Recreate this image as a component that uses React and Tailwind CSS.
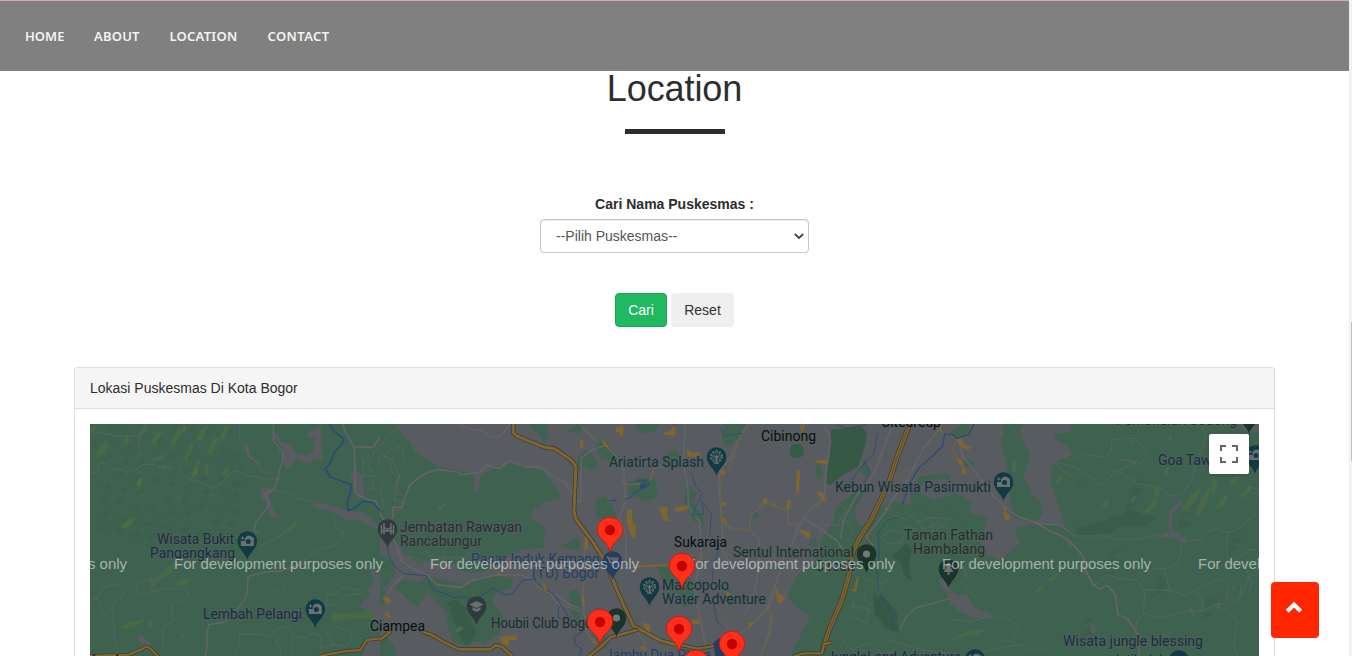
import React from 'react';

const ROAD = '#646467';
const GOLD = '#7f6530';
const GREY = '#585c61';
const GREEN = '#3e624f';
const OLIVE = '#486848';
const BLUE = '#2b4a72';
const FOREST = '#385b48';

const markers = [[610, 530], [600, 622], [682, 566], [679, 629], [732, 644], [696, 663]];
const watermarks = [-82, 174, 430, 686, 942, 1198];

const yellowWest = [
  'M60 205l14-12 4 14-12 16z', 'M82 275l12-20 18-15 4 18-16 22-18 12z', 'M160 240l14-24 4 22-8 26z', 'M205 225l20-28 14-2-14 22-18 20z',
  'M240 250l26-40 12 4-22 40z', 'M300 250l24-44 14 4-26 50z', 'M345 290l16-34 14-8-12 28-16 32z', 'M375 245l18-36 18-10-14 40z',
  'M410 280l22-46 16-2-22 50z', 'M448 232l18-38 14 4-20 44z', 'M360 350l12-28 12 4-8 26z', 'M455 345l14-24 10 6-12 20z', 'M198 380l10-28 10-2-8 34z',
  'M245 300l20-12 30-6-14 14-30 8z', 'M264 320l22-8 12 4-20 12z', 'M370 320l18-24 4 10-12 26z', 'M402 345l6-40 8 4-4 40z',
  'M150 500l24-22 28-10-22 32-22 8z', 'M315 412l22-6-8 14z', 'M415 412l14-12 6 10z', 'M560 566l26-20 34-12 24-24 44-36-14 26-46 34-30 12z',
  'M240 660l24-10 30-32 30-14-14 28-34 22-34 32z', 'M310 670l34-14 20 4-34 20z', 'M140 808l36-22 52-8-36 26z', 'M232 800l10-18 8 8-10 16z',
  'M786 762l60-4 40-8 24 8 40-2-30 22-66-2-70 10z', 'M604 690l18-6-8 12z', 'M634 682l16-4-8 10z', 'M320 838l20-14 4 8z',
];
const yellowEast = [
  'M540 70l16-22-4 24z', 'M655 60l6-20 6 22z', 'M315 186l18-24 6 4-8 22z', 'M450 262l22-24 8 2-10 18z', 'M540 240l20-14-10 24z', 'M570 285l24-24 16-24 14 2-18 26-24 30z',
  'M610 210l14-18 4 24-12 22z', 'M640 160l14-24 4 6-8 24z', 'M690 275l28-46 36-30-10 34-30 40z', 'M740 280l12-44 28-36-4 38-24 46z', 'M780 215l10-50 14 20-10 40z',
  'M790 270l30-40 20-10-22 40z', 'M835 190l24-26 16 4-24 26z', 'M895 150l16-22 10 4-16 22z', 'M860 235l30-30 20-8-26 34z', 'M480 310l14-10 2 12z',
  'M245 520l22-20 16-4-18 20z', 'M285 480l22-10 24-14-20 26z', 'M392 542l12-10 2 6z', 'M0 660l30-18 34-12 48-4-36 20-50 8-26 10z', 'M865 550l6-50 6 4-6 44z', 'M800 565l8-26 4 22z',
  'M790 620l10-12 4 8z', 'M905 450l16-10 0 14z', 'M840 505l16-10-6 14z',
];
const shadeSpecks = Array.from({ length: 70 }, (_, i) => {
  const x = 65 + ((i * 137) % 440);
  const y = 196 + ((i * 71) % 350);
  return `M${x} ${y}l${8 + (i % 5) * 5} -${4 + (i % 4) * 4} 6 8 -${10 + (i % 3) * 6} 12z`;
}).join('');
const shadeEast = Array.from({ length: 45 }, (_, i) => {
  const x = 380 + ((i * 149) % 520);
  const y = 190 + ((i * 67) % 480);
  return `M${x} ${y}l${10 + (i % 5) * 6} -${3 + (i % 4) * 4} 8 6 -${12 + (i % 3) * 6} 9z`;
}).join('');

function Line({ d, c = ROAD, w = 3 }) {
  return <path d={d} fill="none" stroke={c} strokeWidth={w} strokeLinejoin="round" strokeLinecap="round" />;
}

function Highway({ d, w = 9 }) {
  return (
    <>
      <Line d={d} c="#3f3828" w={w + 4} />
      <Line d={d} c={GOLD} w={w} />
    </>
  );
}

function Label({ x, y, children, c = '#14303a', len, size = 14 }) {
  return (
    <text x={x} y={y} fill={c} fontSize={size} textLength={len} lengthAdjust="spacingAndGlyphs" stroke="#565e5f" strokeOpacity="0.75" strokeWidth="2" paintOrder="stroke" fontFamily="Roboto, sans-serif">
      {children}
    </text>
  );
}

function Poi({ x, y, c = '#113a42', kind }) {
  const g = '#697173';
  return (
    <g transform={`translate(${x} ${y})`}>
      <path d="M0 19C-1.500 12-9.800 8-9.800 0A9.800 9.800 0 0 1 9.800 0C9.800 8 1.500 12 0 19Z" fill={c} />
      {kind === 'camera' && (
        <>
          <path d="M-2.500-3.500h1l1.200-1.800h4l1.200 1.800H6.500V5h-13v-5h4z" fill={g} />
          <circle cx="1" cy=".6" r="2.500" fill={c} />
          <path d="M-6.500-3h3.400M-4.800-4.700v3.400" stroke={g} strokeWidth="1" />
        </>
      )}
      {kind === 'wheel' && (
        <g fill="none" stroke={g} strokeWidth="1.200">
          <circle r="5.600" cy="-.5" strokeWidth="1.600" strokeDasharray="2.200 1.320" />
          <circle r="3.900" cy="-.5" strokeWidth=".8" />
          <path d="M0-2.500V6M-2.500-1.500L0 1.500l2.500-3M-2.500 6.200h5" />
        </g>
      )}
      {kind === 'dot' && <circle r="3.600" fill="#737978" />}
      {kind === 'tree' && <path d="M0-7l4 5H2l3 5H1v3h-2V3h-4l3-5h-2z" fill={g} />}
      {kind === 'school' && <path d="M0-5l7 3.500L0 2l-7-3.500zM-4 1v3l4 2 4-2V1L0 3z" fill={g} />}
      {kind === 'gate' && (
        <path d="M-3.500-6V5.500M3.500-6V5.500M-6 -4V5.500M6-4V5.500M-6.500 2H6.500M-3-1.500C-1 1 1 1 3-1.500M-1 0v2M1 0v2" fill="none" stroke={g} strokeWidth="1.400" />
      )}
      {kind === 'cart' && <path d="M-6.500-4h2l2 6h6.500M-4-3H5.500L4 1H-2.500zM-2 4.500h1.200M3 4.500h1.200" fill={g} fillOpacity=".7" stroke={g} strokeWidth="1.200" />}
    </g>
  );
}

function Marker({ x, y }) {
  return (
    <g transform={`translate(${x} ${y})`}>
      <path d="M0 23.500C-.9 18-2.500 14.500-6.500 10.800-9.500 8-12.700 4.600-12.700-.3A12.700 12.500 0 0 1 12.700-.3C12.700 4.600 9.500 8 6.500 10.800 2.500 14.500.9 18 0 23.500Z" fill="#ff2f1c" stroke="#c9150b" strokeWidth="0.800" />
      <circle r="5.200" fill="#c20300" />
    </g>
  );
}

function MapWest() {
  return (
    <g transform="translate(70 360) scale(.33333)">
      <path d={shadeSpecks} fill={FOREST} opacity=".5" />
      <path d={yellowWest.join('')} fill={OLIVE} />
      <path d="M338 205l12-8-8 24zM368 345l12-24 2 20zM204 366l10-12-4 24zM166 494l16-10-14 16z" fill="#6b7038" opacity=".7" />
      <g fill={GREY}>
        <path d="M524 250l12 4 4 32 34 24-20-4-18-16-10-16zM608 225l14-8 10 28 38 14 2 20 30 6 32 14-18 12-40-14-14 24-14 8-10-24 4-26-16-30zM708 238l10-26 36-12 2 100-30-2-22-10 26-12 4-44-20 2z" />
        <path d="M568 386l22-6 18 8-10 22 6 24 10 22 14 16-24 2-10-26-6-18-16-14 6-8z" />
        <path d="M840 345l20-16 18 20 6 60-16 8-14-20-8-36zM728 428l62 8 40 16 50 4 36 30 10 22-24-8-30-18-42-2-40-24-60-16z" />
        <path d="M518 514l30 2-2 18-16 2zM202 830l14-4 24 22 8 20-20-10-18-10zM900 628l60 16v170l-40-20-16-40-36-12 16-24 20-10-14-22 24-16-6-14z" />
        <path d="M890 835l70-18v71h-86z" />
      </g>
      <Line w={2} d="M60 340l22-4 4-26 24 0 12 16 30 2 12 8 38-8 16-14 34-2 20 16 22-6 36 10 22 24 30 8 28 12 20 8 24-14 20-24 26-14 24 12 14 6 24 0 30 10 38-4M60 236l14-14 10-8 18 6 20 4 12 6 30-2 16 0 18-2 22-18 4-14M206 230l4 40-6 24M508 194l0 40 20 22 8 34 28 24 14 22 30 6M60 726l28-22 16-22 40-12 22 24-10 16-30 22 0 20-14 14-20-16-4-26-14-14M130 760l2 60 4 30M200 696l6-26 34-16 44-2 20-16M200 696l24 8 24-10 34-8 66 2 8 20-16 14-34 8-2 26 10 26-32 18-4 40 4 24M605 392l40 4 36 18 44 12M792 470l2 32 24 10-2 26-22 20-42 10-34 20-40 26-52 20-42 4M866 690l-44-10-26 22-26 4-2 32 30-6 28-26 42-4M510 822l56 0 30 8 20-20 34-12 18 22 0 68M510 822l-4 40-12 26M640 820l-22 22 14 34 0 12M668 830l44 4 16-14 24 8 2 60M760 810l24 22 0 26-44 6M800 800l40 16 4 30-24 14-34-8" />
      <Line w={4} d="M610 194l0 48 28 36 0 20-14 52-12 38-30 16 16 20-4 16-36 46-6 24 14 10M570 640l26-6 36 0 80-28M534 650l-2 50-10 24-56 62-50 8-6 40 2 24-6 30M570 640l-36 10" />
      <Line w={5} d="M820 194l4 20 28 44 2 50 2 92 40 20 22 4 28 60M850 260l60 2 18-28 32-26" />
      <Line w={2} d="M880 320l-6-36 10-14 14 14-14 16zM886 300l20-2 8-26 34 2 10-16M880 324l0 22 34 4 0-14-16-4 0-24M930 280l-4 34 16 22-4 60-20 8M890 375l20-12 2 24-20 0 0 18" />
      <Line c={BLUE} w={5} d="M780 194l10 18 32 24-4 14-24 26-14 34-14 16 14 24 64 24-2 18-10 38 2 22 20-8 24-20 28 2 40 42" />
      <Highway w={7} d="M60 888l116-4 38-16 14-8 12 4 28 30M750 888l72-14 50-4 18-30 36-4 34-12" />
      <path d="M938 720l20-10 2 24-16-8zM946 760l14-14v24z" fill="#8b6e2f" />
    </g>
  );
}

function MapCenter() {
  return (
    <g transform="translate(380 420) scale(.33333)">
      <path d="M0 12h300v500l-120 196H0z" fill={GREY} />
      <g fill={GREEN}>
        <path d="M0 12h46l4 10 14 8 0 16 24 16 14 30 50 34 30 16-34 8-26 20-24 32-18 58-30 6-2 42-50-10z" />
        <path d="M135 150l50-8 96 16 2 60 14-6 4-50 24-8 30-12 36-14 38 10 60 14 24 34 24 34 10 12-50 14-36 22-10 30 44 20-4 66-60 2-44 20-36 32-34 16-40 6-34-8-24-26-60 2-42 0-40-20-16-28-34-20 4-66 40-34 18-50z" />
        <path d="M0 400l34 20 14 40-24 32-24 14zM0 500l24 20-6 26-18 10zM100 500l40-30 100 20 20 4 36-22 60-6 44 12-6 26-44 14-14 28 26 32 14 28-26 40-40 26-20-10-26 16-46-12-16-46 0-40-28-30-28-30z" />
        <path d="M45 500l30-24 68 20-8 30-20 34-20-10zM0 660l20-12 30 44-10 16H0z" />
        <path d="M448 12l52 0 6 30-12 28-22-30-22-20zM594 112l22-24 26 24 12 24-18 14-28-10-20 20zM644 70l14 22-16-30 40 2 10 24 30 22-18 14-40-6zM744 190l30-16 52 4 8 50-36 16-50-20zM650 240l22-12 20 20 16 34-4 20-20 8-34-20-4-34zM540 376l26-6 18-18 16 12-4 28-40-8zM845 110l40-20 15 16v30l-46 4zM830 440l60-10 10 90-40-8z" />
        <path d="M566 516l28-8 10 40-6 56-18-4-8-50zM620 90l16 16-20 6zM630 640l36-10 20 40-8 20z" />
        <path d="M760 12l80 0-20 24-34 4zM560 34l30-22 20 0-10 30z" />
      </g>
      <path d="M200 545l30-6 30 30 30 70-30 40-20-30z" fill="#385a49" />
      <path d="M168 270l22-20 10 2-18 20zM224 630l20-12 6 8-20 14z" fill="#466a4f" />
      <Line w={2} d="M0 80l34-46 28-10M0 100l36 18 22 52-16 70 36 10M0 130l30-40 34-10 10 40M10 260l-8-60 36-40-10-40M60 160l-20 50 28 16M0 480l40-24M70 412l40 0 30 20 44-20 30 0 0 54M120 398l20-4 36 60M190 395l0 68M220 414l44-4 10-22M100 335l40-2 34-26 26 22 30 6" />
      <Line w={5} d="M38 294l2-32 26 0 6-22 18-46 42-32 42-14 58 8 14 8 50-6 26-22 38 10 28-24 50 20 40-2 42 30 34 16 22 32 8 24 18 2 0-60 2-70 28-22 42-16 38 36 20 40 4 94-18 46 20 52 0 90M0 280l50 96 14 46 34 26 42 16 30 30 72 8 40-22 60-14 80-2 34 14 40 36 30 10 42 30 28 10" />
      <Line w={4} d="M70 466l-30 30-30 40M240 16l28 10 40 6 24 18 24 2 16-16 20-26M600 14l28 30 26 24M728 184l20 10 36-4 28-12 8-32 60-14M612 360l2 100-6 80 10 90 22 40M790 440l-90 6M470 500l40 20 20 28 70 26M750 600l24 40 24 34" />
      <Line c={BLUE} w={3} d="M0 290l20 60 6 54 18 36 30 22 64 4 20 42 70 26 20-4 30 10 40-22 20-14 40 22 20-6 30-40 30-2 34 30 30 14 22 34 32 50 4 14 20-20 24 0" />
      <Line c={BLUE} w={3} d="M536 560l-2 30 26 22 12-22M606 636l-24 14 4 24 20 14-10 20M770 184l36-4-2 18-42 20-8 14-20 6M690 240l20 4-8-8M680 300l24 20-4 10" />
      <path d="M780 188l26-8-12 24-14 4z" fill={BLUE} />
      <g fill={GOLD}>
        <path d="M708 22l22-6 0 26-8 12-4-16-10 0zM844 38l26-4 8-14 8 0 0 28-26-4zM600 58l10 4 0 20-10 0zM836 262l28 0-4 24 8 18-14-2-10-20zM742 268l14 2 0 30 12 20-4 36-10-8-14-40zM670 60l18 20-6 6-16-18zM884 260l16 2v12l-16 0zM8 534l16-4 10 14-14 10zM14 580l10-6 10 18-16 0zM358 650l52-4 0 14-22 0-4 18-16-4zM486 490l10 4 6 28-12-18zM350 456l16 6-10 6zM606 530l8 2 0 30-10-20zM766 436l130-4v6l-130 4zM614 350l10 0 0 40-8 0zM640 650l10 20-10 6zM790 606l20 8 0 26-16-6zM772 682l24-4 2 16z" />
      </g>
      <Line c={GOLD} w={2} d="M612 395l2 65-6 80 10 90 22 40M728 184l20 12 36-4 28-12 8-32" />
      <Highway d="M400 8l0 30 10 10 84 34 30 4 50 34 14 20-6 134 6 24 52 70 38 60 36 90 32 70 14 30 20 10 62 34 38 10 50 10" />
      <Highway d="M628 708l34-28 30-28 78-22M0 660l30-24M130 636l28 10 30 18 48 24 96 0 14-12 20 4 30 28" w={8} />
    </g>
  );
}

function MapEast() {
  return (
    <g transform="translate(660 420) scale(.33333)">
      <g fill={GREEN}>
        <path d="M0 90l44-12 18 54-16 16-46-12zM190 12h70l-18 40-48 28-8-30zM78 190l34 30-18 26 34 40 0 34-30-20-24-50zM278 270l18 14-14 14z" />
        <path d="M484 360l30-50 16-50 50-40 12-22 20 24-28 46 8 40 30 20 12-28 18-30 42-28 54 14 36-20 72 24 44-10v470H384l40-80 26-50-42-30-26-30 30-64 52-40 10-30z" />
        <path d="M750 230l26-60 70-10 54 16v60l-60 44-80-10zM196 504l20 8 8 40-18 6-12-30zM30 420l66 60 10 70-34 14-42-60zM0 600l28 6-6 24-22 4zM110 290l24 20-14 24zM450 360l30-8-10 30-24-6zM344 440l20-10-8 30zM470 120l20 30-10 30-14-10zM610 120l20 30-10 20-20-14z" />
        <circle cx="410" cy="93" r="22" fill="#345b45" />
      </g>
      <g fill={GREY}>
        <path d="M836 480l40-20 24 0v108l-14-12-20-24zM790 190l40-14 70 8v56l-20-14-60 12-40-20z" />
      </g>
      <path d="M514 30l90-12 18 20-8 44-20 60-40 20-26 20-18 14-12-6 12-100zM640 520l30 10 40 44 8 64-40-14-36-44zM696 410l44-40 16 20-10 44 8 50-22-20-10-36z" fill="#365946" />
      <Line w={5} d="M76 12l-6 120 12 60 4 70 34 44 4 100-20 100 8 50 24 118M264 14l-22 30-30 70-30 36-6 30 6 90 6 76-4 40 20 36M496 18l16 44-14 90-4 84-42 30-38 54-12 40-30 50-18 60-30 90-42 50-40 30M432 296l40 24 56 40 20 26M700 12l-26 64-34 90-50 60-40 76-8 50M846 14l-10 16-46 54-50 100-46 60-16 30-60 76 20 26" />
      <Line w={4} d="M0 440l30-2 90-4M190 302l20 20 60 10 28 24-2 90-10 60-36 90M270 328l2-40 40-40 72 22 0 42 30 2M320 560l18 20-8 60-28 68M720 626l20-36 26-26 60-16 74-20" />
      <Line w={2} d="M700 286l34 10 20-10 20 20 44-14 76 10M664 350l30-20 40 10-8 26-40 6zM470 366l20-50 44-2 8-20 20-24-20-16-20 20-4 30M540 294l34 20 4 32M770 300l20 30 40-20 20 12 40-10M620 480l40 10 22-12-24 30-6 24M576 590l46 22 4-46-50-4 4-30M620 510l-6 24 20 20 8-10M540 650l34 40 50-20 44 30 40-4M690 660l100 30 80 10M740 320l26 8-4 30 34 0M810 290l10 50 44-40" />
      <Line c={BLUE} w={2.5} d="M182 22l10 26 54-8M94 160l14 40 20 22-20 34-10 30 34-4-8-40 30 40-4 60 30 40-20 50-4 60M120 480l20 60 20 4 10 60 20 20M652 40l-10 60-46 50-20 30-30 20M712 292l-30 10-28 36 4 70-8 44 6 60 34 60 10 60M610 120l20 40-18 30M530 14l30 12 60-12" />
      <Line c={BLUE} w={3.5} d="M898 56l-44-14-6 36-30 30-40 34-30 50-20 60" />
      <g fill={GOLD}>
        <path d="M4 40l26 0 10-18 6 0 2 26-20 0-24-4zM78 88l20 12 26-4-8 14-34 0zM182 150l14 4-4 12-12-2zM408 152l14-2-2 18-4 54-8-2 2-60zM466 122l36-4 0 14-36-4zM468 214l20 4 12 28-12-4zM380 240l12 0-4 28-8 0zM414 326l24 8 14 0-4 24-22-18zM308 238l14-4-2 18-10-2zM334 248l12 4-6 12zM46 262l40-6-4 14-36 8zM12 280l14 18-4 4-20 0-10-40zM186 246l18 4-16 8zM182 294l16 0 0 18-12-4zM196 514l20 6-16 10zM346 500l10 20 20 14-20 20-8-30zM262 608l20-2-14 18zM300 524l18 14-18 6zM418 14l18-2-10 30zM96 600l20-4 2 16-22 0zM680 260l6 12-14-4zM570 510l12-4 10-38 4 4-8 44zM838 22l12 16-14-4zM876 84l16-20 8 40-10 22z" />
      </g>
      <Line c="#75623a" w={2.5} d="M264 14l-26 50-34 90-24 24 6 110 14 34 68 10M270 328l2-40 40-40 72 22 0 42 30 2M20 406l98 0M20 436l98 0M350 520l-28 50 10 20-8 60-24 58M172 560l16 34 30 20M492 236l-34 36M744 150l-34 40M636 330l-20 34-36 26" />
      <Highway d="M745 22l-34 90-24 76-54 112-36 56-18 40-12 70-20 70-42 100-16 52" w={12} />
      <Line c="#4b402a" w={2} d="M745 22l-34 90-24 76-54 112-36 56-18 40-12 70-20 70-42 100-16 52" />
      <Highway d="M-10 658l34 10 90 18 60-10 60-12M404 708l26-8 56 0 6-28 20-4" w={7} />
      <path d="M160 668l18-14 20 20-6 34h-26z" fill="#243e62" />
    </g>
  );
}

function MapFarEast() {
  return (
    <g transform="translate(950 420) scale(.33333)">
      <path d="M0 12h930v700H0z" fill={GREEN} />
      <path d={shadeEast} fill={FOREST} opacity=".45" />
      <g fill={GREY}>
        <path d="M0 12h360l10 20-58 12 2 14 40 18 10 24-20 14-34 10-10 56 26 80 20 60-82-8-60 10-10 22 18 22-60 56-44-18-20-40 16-40 8-30-50-12-30-32-32-22z" />
        <path d="M0 510l20 14 30 0 26 40 54 20-14 12-50-6-30-10-20-18-16-10zM690 240l8 10-32 34 0 44 24 16 20 16-6 12-22-12-8-10-46 0 30-16-4-26 4-32zM420 606l18 24 0 14-14-12zM350 350l18 28-8 6-14-30zM396 408l14 50-10 6z" />
      </g>
      <g fill={GREEN}>
        <path d="M0 40l36-28 24 0-4 24-30 20zM160 12l62 0-14 20 34 74-24 72 22 20 0 22 32 24 6 40-24 22-60-10-14-54-4-60-10-60-16-60 10-20zM202 206l24-6 20 14-18 14-28-8zM0 220l30 4 32 24 0 48-14 6-48-6zM40 124l14-8 20 14-10 12-20-6z" />
      </g>
      <path d={yellowEast.join('')} fill={OLIVE} />
      <path d="M380 325l74-18 36-20 34-2 8-20 40 14 50 10-40 30-60-4-40 24-102 10z" fill={FOREST} opacity=".7" />
      <Line w={2} d="M170 12l30 30 32 40M380 120l20-18 60 10 24-18 0-34 40-4 34 0 32 40-14 34-60-12M516 118l40 10-54 26-50 40-28-20-46-32-70-18 54-22 18 18M310 124l44 40 20 2M464 160l36-10 60 40 66 12 36 26 32-4M750 12l20 36-24 60-20 70-32 50M370 348l90 0 40 10 66 0 40-10 40 0M710 362l40-2 20-24 30-10 32 12 0 90 54 12 20 50-10 30M830 338l30-6 40-36 26-20M694 372l0 34-20 30-32 10-32 0-34 36M645 452l14 60M470 464l40 12 54 4 20 40-4 64-18 14-6 40M424 502l36-26 14-12M580 508l80 4 46 14 32-14 30-20 44-14 24 28-8 34 30 0 20-20 20-50 34-14M740 514l20 30-6 14 16 18M580 580l46 14 84-20 50-2 40-20 26 2M800 560l30 14 30 24 0 34-10 40 12 36M836 436l60-46 30 0M898 200l28 10 0 14-26-8zM0 600l60 4 50-12 60 0 40 34M206 626l-20 38-40-2M60 704l90-20 60-10 30 14 54 0M500 682l60-8 90-30 20-10M720 560l10 30M30 480l30 34 50 46" />
      <Line w={5} d="M0 40l26 24 14 46 60 78 34 44 40 36 34 24 48 14 40 26 40 16 24 16 26 30 16 20-2 24 30 56 20 14 18-12 10 4 18 24 8 60 30 14 30 44 4 92" />
      <Line w={3} d="M258 312l70 2 46 34M20 470l-10-20 30-10 10 34" />
      <path d="M22 54l12 0 10 20 20 8-10 8-24-12zM18 118l16 0 8 26 6 4 2 18-16-8 4-18-12-10zM160 262l8 0 0 18 12 4-2 18-12 0-4-20z" fill={GOLD} />
      <Line c={GOLD} w={3} d="M24 60l-16 24 16 36" />
      <Line c={BLUE} w={4} d="M0 40l22 16 36-14 14-30" />
      <path d="M862 12h65v26h-30z" fill={GREY} />
      <path d="M186 130l4-6 10 8-4 24-8 0z" fill="#52635b" />
    </g>
  );
}

function LocationMap() {
  return (
    <svg viewBox="90 424 1169 232" className="block h-[232px] w-full" role="img">
      <defs>
        <clipPath id="centreArea"><path d="M380 424h299v232H380z" /></clipPath>
        <clipPath id="eastArea"><path d="M678 424h274v232H678z" /></clipPath>
      </defs>
      <path d="M90 424h300v232H90z" fill={GREEN} />
      <path d="M440 424h520v232H440z" fill={GREY} />
      <MapWest />
      <g clipPath="url(#centreArea)"><MapCenter /></g>
      <g clipPath="url(#eastArea)"><MapEast /></g>
      <MapFarEast />

      <Poi x={247.300} y={541} kind="camera" />
      <Poi x={315.300} y={609} kind="camera" />
      <Poi x={387.500} y={529} kind="gate" c="#303a3d" />
      <Poi x={476.500} y={606} kind="school" c="#303a3d" />
      <Poi x={716.500} y={457} kind="wheel" />
      <Poi x={649.500} y={587} kind="wheel" />
      <Poi x={612.500} y={561} kind="cart" c="#243e62" />
      <Poi x={616.500} y={618} kind="dot" c="#1c3329" />
      <Poi x={866.500} y={554} kind="dot" c="#1c3329" />
      <Poi x={948.500} y={569} kind="tree" c="#1c3329" />
      <Poi x={1003.500} y={482} kind="camera" />
      <Poi x={1255} y={455} kind="camera" />
      <Poi x={1249} y={415} c="#1c3329" />
      <Poi x={975} y={659} kind="camera" />
      <Poi x={1179} y={660} />

      <Label x={157} y={544} len={77}>Wisata Bukit</Label>
      <Label x={150} y={558} len={85}>Pangangkang</Label>
      <Label x={203} y={619} len={99}>Lembah Pelangi</Label>
      <Label x={370} y={631} len={55} c="#080d0d">Ciampea</Label>
      <Label x={88} y={665} c="#080d0d">Jambu</Label>
      <Label x={400} y={532} len={122} c="#242f31">Jembatan Rawayan</Label>
      <Label x={400} y={546} len={82} c="#242f31">Rancabungur</Label>
      <Label x={471} y={564} len={129} c="#243e62">Pasar Induk Kemang</Label>
      <Label x={532} y={578} len={67} c="#243e62">(TU) Bogor</Label>
      <Label x={491} y={628} len={106} c="#1c2c2b">Houbii Club Bogor</Label>
      <Label x={609} y={467} len={95}>Ariatirta Splash</Label>
      <Label x={761} y={441} len={55} c="#080d0d">Cibinong</Label>
      <Label x={881} y={427} len={60} c="#080d0d">Citeureup</Label>
      <Label x={674} y={547} len={53} c="#080d0d">Sukaraja</Label>
      <Label x={733} y={557} len={121} c="#183329">Sentul International</Label>
      <Label x={815} y={571} len={40} c="#183329">Circuit</Label>
      <Label x={662} y={590} len={67}>Marcopolo</Label>
      <Label x={662} y={604} len={104}>Water Adventure</Label>
      <Label x={605} y={660} len={106} c="#243e62">Jambu Dua Plaza</Label>
      <Label x={827} y={662} len={134}>JungleLand Adventure</Label>
      <Label x={835} y={492} len={156}>Kebun Wisata Pasirmukti</Label>
      <Label x={904} y={540} len={89} c="#183329">Taman Fathan</Label>
      <Label x={913} y={554} len={72} c="#183329">Hambalang</Label>
      <Label x={1158} y={465} len={72}>Goa Tawing</Label>
      <Label x={1116} y={425} len={121} c="#183329">Pemandian Sodong</Label>
      <Label x={1063} y={646} len={140}>Wisata jungle blessing</Label>
      <Label x={1112} y={665} len={54}>Jatibulak</Label>

      {watermarks.map((x) => (
        <text key={x} x={x} y="569" fill="#fff" fillOpacity=".53" fontFamily="'Liberation Sans', sans-serif" fontSize="15" textLength="209">
          For development purposes only
        </text>
      ))}
      {markers.map(([x, y]) => <Marker key={`${x}-${y}`} x={x} y={y} />)}
    </svg>
  );
}

export default function App() {
  return (
    <div className="relative flex h-[656px] w-[1352px] overflow-hidden bg-white font-['Liberation_Sans',sans-serif] text-sm text-[#2d2d2d]">
      <div className="flex w-[1349px] flex-col">
        <nav className="flex h-[71px] shrink-0 items-center border-t border-[#d8a9b4] bg-[#808080] px-2.5 font-['Noto_Sans',sans-serif] text-[13px] font-semibold text-[#f3f3f3]">
          <a className="w-[69px] px-[15px]">HOME</a>
          <a className="w-[75.500px] px-[15px] tracking-[0.2px]">ABOUT</a>
          <a className="w-[98px] px-[15px] tracking-[0.25px]">LOCATION</a>
          <a className="px-[15px] tracking-[0.4px]">CONTACT</a>
        </nav>

        <header className="flex flex-col items-center">
          <h2 className="mt-[-2px] text-4xl leading-10 tracking-[-0.1px]">Location</h2>
          <div className="mt-5 h-[5px] w-[100px] bg-[#2d2d2d]" />
        </header>

        <form className="flex flex-col items-center pt-[60px]">
          <label className="font-bold leading-5">Cari Nama Puskesmas :</label>
          <div className="mt-[5px] flex h-[34px] w-[269px] items-center justify-between rounded border border-[#c6c6c6] pl-[15px] pr-[3px] text-[#555] shadow-[inset_0_1px_1px_rgba(0,0,0,.075)]">
            <span>--Pilih Puskesmas--</span>
            <svg className="size-3" viewBox="0 0 12 12" fill="none" stroke="#444" strokeWidth="1.800"><path d="M1.800 4L6 8 10.200 4" /></svg>
          </div>
          <div className="mt-10 flex gap-1">
            <button type="button" className="h-[34px] w-[52px] rounded border border-[#12a851] bg-[#1fb962] text-white">Cari</button>
            <button type="button" className="h-[34px] w-[63px] rounded bg-[#efefef] text-[#333]">Reset</button>
          </div>
        </form>

        <section className="ml-[74px] mt-10 w-[1201px] rounded-t border border-b-0 border-[#ddd]">
          <h3 className="flex h-[41px] items-center rounded-t border-b border-[#ddd] bg-[#f5f5f5] px-[15px]">Lokasi Puskesmas Di Kota Bogor</h3>
          <div className="relative px-[15px] pt-[15px]">
            <LocationMap />
            <button type="button" aria-label="Fullscreen" className="absolute right-[25px] top-[25px] flex size-10 items-center justify-center rounded-[2px] bg-white shadow-[0_1px_4px_-1px_rgba(0,0,0,.3)]">
              <svg className="size-[18px]" viewBox="0 0 18 18" fill="#666"><path d="M0 0v6h2V2h4V0zM16 0h-4v2h4v4h2V0zM16 16h-4v2h6v-6h-2zM2 12H0v6h6v-2H2z" /></svg>
            </button>
          </div>
        </section>
      </div>

      <div className="flex w-[3px] flex-col items-end bg-[#f1f1f1] pt-[322px]">
        <div className="h-[139px] w-px bg-[#c1c1c1]" />
      </div>

      <button type="button" aria-label="Back to top" className="absolute left-[1271px] top-[582px] flex h-14 w-12 items-start justify-center rounded bg-[#ff2600] pt-[19px]">
        <svg className="mr-[2px] h-3 w-[18px]" viewBox="0 0 18 12" fill="#fff"><path d="M9 .8L.8 8.800 3.700 11.800 9 6.500l5.300 5.300 2.900-3z" /></svg>
      </button>
    </div>
  );
}
